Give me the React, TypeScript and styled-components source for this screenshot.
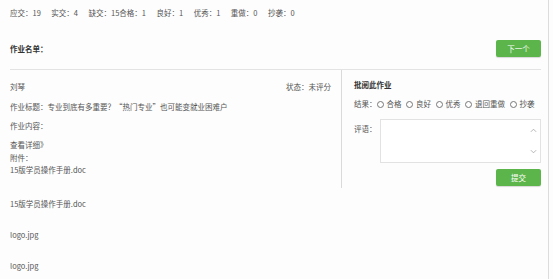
import styled, { createGlobalStyle } from "styled-components";

const GlobalStyle = createGlobalStyle`
  html, body {
    margin: 0;
    padding: 0;
    background: #fdfdfd;
  }
  body {
    font-family: "Noto Sans CJK SC", "Noto Sans", sans-serif;
    font-size: 7.5px;
    color: #555;
  }
`;

const stats = ["应交：19", "实交：4", "缺交：15合格：1", "良好：1", "优秀：1", "重做：0", "抄袭：0"];
const results = ["合格", "良好", "优秀", "退回重做", "抄袭"];
const files = ["15版学员操作手册.doc", "logo.jpg", "logo.jpg"];

const App = () => {
  return (
    <Frame>
      <GlobalStyle />
      <Page>
        <Stats>
          {stats.map((s, i) => (
            <span key={i}>{s}</span>
          ))}
        </Stats>

        <Header>
          <Title>作业名单：</Title>
          <Button>下一个</Button>
        </Header>

        <Panel>
          <Left>
            <TopRow>
              <span>刘琴</span>
              <span>状态：未评分</span>
            </TopRow>
            <Line>作业标题：专业到底有多重要？“热门专业”也可能变就业困难户</Line>
            <Line>作业内容：</Line>
            <Tight>
              <div>查看详细》</div>
              <div>附件：</div>
              <div>15版学员操作手册.doc</div>
            </Tight>
          </Left>

          <Right>
            <Title>批阅此作业</Title>
            <ResultRow>
              <span>结果：</span>
              {results.map((r) => (
                <RadioLabel key={r}>
                  <Radio type="radio" name="result" />
                  {r}
                </RadioLabel>
              ))}
            </ResultRow>
            <CommentRow>
              <span>评语：</span>
              <TextBox>
                <Arrow viewBox="0 0 8 5">
                  <path d="M1 4 L4 1 L7 4" />
                </Arrow>
                <Arrow viewBox="0 0 8 5">
                  <path d="M1 1 L4 4 L7 1" />
                </Arrow>
              </TextBox>
            </CommentRow>
            <SubmitRow>
              <Button>提交</Button>
            </SubmitRow>
          </Right>
        </Panel>

        <Files>
          {files.map((f, i) => (
            <div key={i}>{f}</div>
          ))}
        </Files>
      </Page>
    </Frame>
  );
};

const Frame = styled.div`
  width: 549px;
  height: 279px;
  border-right: 1px solid #dcdcdc;
  box-sizing: border-box;
  overflow: hidden;
`;

const Page = styled.div`
  width: 531px;
  padding-left: 10px;
`;

const Stats = styled.div`
  display: flex;
  gap: 10.5px;
  padding-top: 7px;
  line-height: 12px;
  height: 12px;
`;

const Header = styled.div`
  display: flex;
  justify-content: space-between;
  align-items: center;
  margin-top: 21px;
  height: 17px;
`;

const Title = styled.div`
  font-weight: bold;
  color: #333;
  line-height: 12px;
`;

const Button = styled.button`
  width: 45px;
  height: 17px;
  padding: 0;
  border: none;
  border-radius: 2px;
  background: #5cb54a;
  color: #fff;
  font-family: inherit;
  font-size: 7.5px;
  box-shadow: 0 1px 1px rgba(0, 0, 0, 0.15);
`;

const Panel = styled.div`
  display: flex;
  margin-top: 12px;
  border-top: 1px solid #e3e3e3;
  height: 118px;
`;

const Left = styled.div`
  width: 332px;
  padding-top: 11px;
  border-right: 1px solid #dadada;
  box-sizing: border-box;
  padding-right: 10px;
`;

const TopRow = styled.div`
  display: flex;
  justify-content: space-between;
  line-height: 12px;
`;

const Line = styled.div`
  line-height: 12px;
  margin-top: 7.5px;
`;

const Tight = styled.div`
  margin-top: 7px;
  line-height: 12.5px;
`;

const Right = styled.div`
  flex: 1;
  padding-left: 12px;
  padding-top: 9px;
`;

const ResultRow = styled.div`
  display: flex;
  align-items: center;
  margin-top: 7px;
  line-height: 12px;
`;

const RadioLabel = styled.label`
  display: flex;
  align-items: center;
  margin-right: 4.5px;
`;

const Radio = styled.input`
  width: 7px;
  height: 7px;
  margin: 0 3px 0 0;
`;

const CommentRow = styled.div`
  display: flex;
  margin-top: 9px;
  line-height: 12px;
  span {
    padding-top: 4px;
    width: 26px;
  }
`;

const TextBox = styled.div`
  width: 161px;
  height: 44px;
  border: 1px solid #e2e2e2;
  background: #fff;
  box-sizing: border-box;
  display: flex;
  flex-direction: column;
  align-items: flex-end;
  justify-content: space-between;
  padding: 8px 3px 8px 0;
`;

const Arrow = styled.svg`
  width: 7px;
  height: 5px;
  fill: none;
  stroke: #aaa;
  stroke-width: 1;
`;

const SubmitRow = styled.div`
  display: flex;
  justify-content: flex-end;
  margin-top: 6px;
`;

const Files = styled.div`
  padding-top: 10px;
  div {
    line-height: 12px;
    margin-bottom: 19px;
  }
`;

export default App;
